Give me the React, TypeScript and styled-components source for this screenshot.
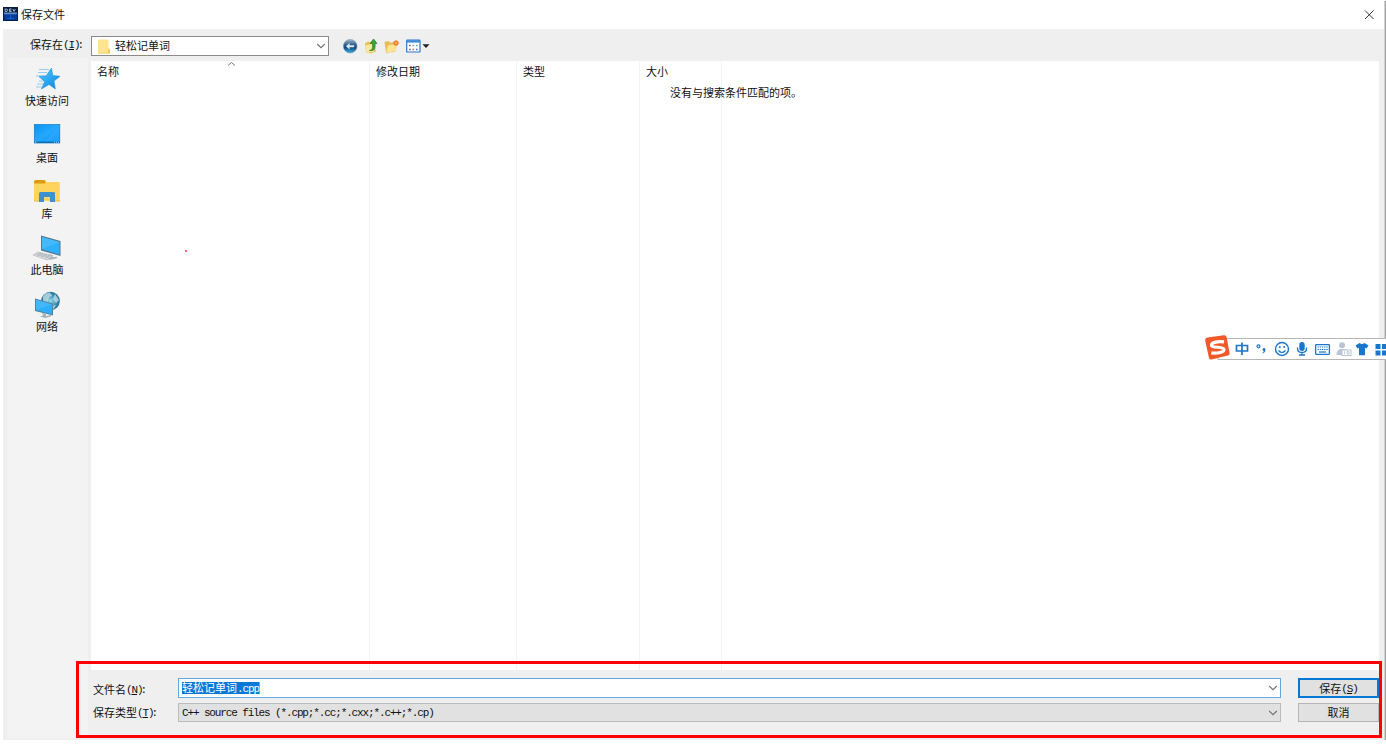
import React from 'react';
import styled, { createGlobalStyle } from 'styled-components';

const Global = createGlobalStyle`
  * { box-sizing: border-box; }
  html, body { margin: 0; padding: 0; background: #fff; overflow: hidden; }
  body { font: 11px/16px "Noto Sans CJK SC", sans-serif; color: #101010; }
`;

const Window = styled.div`
  position: relative;
  width: 1386px;
  height: 745px;
  overflow: hidden;
  background: #fff;
`;
const TitleBar = styled.header`
  display: flex;
  align-items: center;
  justify-content: space-between;
  height: 29px;
  padding: 0 11px 0 3px;
`;
const TitleText = styled.div`
  display: flex;
  align-items: center;
  gap: 3px;
  height: 28px;
  margin-bottom: 1px;
`;
const Body = styled.main`
  display: flex;
  flex-direction: column;
  width: 1381px;
  height: 711px;
  margin-left: 3px;
  background: #efefef;
`;
const Toolbar = styled.div`
  display: flex;
  height: 32px;
  padding-top: 7px;
`;
const LookIn = styled.div`
  width: 88px;
  padding: 0 0 0 27px;
  white-space: nowrap;
`;
const Latin = styled.span`
  font-family: "Liberation Mono", monospace;
  font-size: 11px;
  letter-spacing: -1.13px;
`;
const Mnemonic = styled(Latin)`
  line-height: 1;
  vertical-align: 1px;
`;
const Colon = styled(Mnemonic)`
  margin-left: -2px;
`;
const FolderSelect = styled.div`
  display: flex;
  align-items: center;
  width: 238px;
  height: 20px;
  padding: 0 2px 0 6px;
  border: 1px solid #8a8a8a;
  background: #fff;
  svg:last-child { margin-left: auto; }
`;
const FolderName = styled.span`
  height: 18px;
  margin-left: 5px;
`;
const Tools = styled.div`
  display: flex;
  align-items: flex-start;
  gap: 5.500px;
  margin: 3px 0 0 14px;
  svg:nth-child(2) { margin-top: -1px; }
`;
const Content = styled.div`
  display: flex;
  height: 679px;
`;
const Places = styled.nav`
  display: flex;
  flex-direction: column;
  width: 81px;
  height: 680px;
  margin: -3px 3px 0 4px;
  padding: 7px 1px 0 0;
  background: #f3f3f3;
`;
const Place = styled.div`
  display: flex;
  flex-direction: column;
  align-items: center;
  height: 56.4px;
  svg { display: block; }
`;
const PlaceName = styled.span`
  margin-top: -0.8px;
`;
const Main = styled.section`
  width: 1288px;
`;
const List = styled.div`
  position: relative;
  display: flex;
  height: 609px;
  background: #fff;
`;
const Column = styled.div<{ $w: number }>`
  position: relative;
  width: ${p => p.$w}px;
  padding: 2px 0 0 6px;
  border-right: 1px solid #eff4f8;
`;
const SortMark = styled.svg`
  position: absolute;
  left: 136px;
  top: 0;
`;
const Empty = styled.div`
  position: absolute;
  left: 579px;
  top: 23px;
`;
const RedDot = styled.i`
  position: absolute;
  left: 94px;
  top: 189px;
  width: 2px;
  height: 2px;
  background: #f46a6a;
`;
const Form = styled.div`
  display: grid;
  grid-template-columns: 87px 1103px 98px;
  padding-top: 8px;
`;
const Label = styled.label<{ $top: number }>`
  padding: ${p => p.$top}px 0 0 2px;
  white-space: nowrap;
`;
const Field = styled.div<{ $active?: boolean }>`
  display: flex;
  align-items: center;
  justify-content: space-between;
  width: 1103px;
  height: ${p => (p.$active ? 20 : 19)}px;
  margin-bottom: ${p => (p.$active ? 5 : 0)}px;
  padding: 0 2px 0 3px;
  border: 1px solid ${p => (p.$active ? '#61a9e2' : '#bcbcbc')};
  background: ${p => (p.$active ? '#fff' : '#e1e1e1')};
`;
const Selected = styled.span`
  height: 12px;
  line-height: 11px;
  color: #fff;
  background: #0878d7;
  border-right: 1px solid #e88b50;
`;
const Button = styled.button<{ $primary?: boolean }>`
  width: 81px;
  height: ${p => (p.$primary ? 20 : 19)}px;
  margin: 0 0 0 17px;
  padding: 0;
  border: ${p => (p.$primary ? '2px solid #0878d7' : '1px solid #b5b5b5')};
  background: #e1e1e1;
  color: #101010;
  font: inherit;
  line-height: 15px;
`;
const Highlight = styled.div`
  position: absolute;
  left: 76px;
  top: 661px;
  width: 1306px;
  height: 77px;
  border: 3px solid #fe0000;
`;
const Edge = styled.div`
  position: absolute;
  right: 0;
  top: 1px;
  width: 2px;
  height: 739px;
  background: linear-gradient(90deg, #d2d2d2 50%, #a2a2a2 50%);
`;
const Ime = styled.div`
  position: absolute;
  left: 1204px;
  top: 334px;
  width: 182px;
  height: 28px;
  svg { display: block; }
`;

const Chevron = () => (
  <svg width="10" height="8" viewBox="0 0 10 8">
    <path d="M1.2 2l3.8 3.700L8.800 2" fill="none" stroke="#707070" strokeWidth="1.1" />
  </svg>
);

const AppIcon = () => (
  <svg width="15" height="14" viewBox="0 0 14 14" preserveAspectRatio="none">
    <rect width="14" height="14" fill="#0a1c40" />
    <rect x="1" y="7" width="12" height="6" fill="#073a9b" />
    <rect x="1" y="5.500" width="12" height="1.800" fill="#5a91cf" />
    <path d="M2 2h1.500l.8 1-.8 1.500H2zM8 2H6v2.500h2M6 3.200h1.700M9.300 2l1 2.500 1.200-2.500" fill="none" stroke="#a4bdd9" strokeWidth=".9" />
    <path d="M7 8v3M4 11.500h6" stroke="#0a64c9" />
  </svg>
);

const Folder = () => (
  <svg width="12" height="15" viewBox="0 0 12 15">
    <path d="M0 .5h10.500V9l1.500 1v4.500H0z" fill="#ffe391" />
    <path d="M10 9.500l2 1v4h-2zM0 13.700h12v.8H0z" fill="#f0ca5c" />
  </svg>
);

const BackIcon = () => (
  <svg width="15" height="15" viewBox="0 0 15 15">
    <defs>
      <linearGradient id="back" x2="0" y2="1">
        <stop stopColor="#a7bccd" /><stop offset=".4" stopColor="#315e8c" />
        <stop offset=".6" stopColor="#174878" /><stop offset="1" stopColor="#2fb5ed" />
      </linearGradient>
    </defs>
    <circle cx="7.200" cy="7.200" r="6.800" fill="url(#back)" stroke="#6888a2" strokeWidth=".5" />
    <path d="M3 7.200l3.500-3.200v2.300h4.700v2H6.500v2.300z" fill="#d8ecfa" />
  </svg>
);
const UpIcon = () => (
  <svg width="15" height="16" viewBox="0 0 15 16">
    <path d="M1 5l4-1.500 1 1h4l2 9-5 2-5-1z" fill="#e7c25a" />
    <path d="M1.500 7.500l6-1.500 3 1-1 7-7 .700z" fill="#fae89c" />
    <path d="M5.500 12.500c3 0 3.300-3 3-7H6L9.600 1 13 5.500h-2c.6 5-.8 8-5.500 7z" fill="#3aa735" stroke="#267a27" strokeWidth=".7" />
  </svg>
);
const NewFolderIcon = () => (
  <svg width="16" height="15" viewBox="0 0 16 15">
    <path d="M.500 3l4-1L6 3.500h5v9l-9 1z" fill="#e8bd59" />
    <path d="M4 6l9-1-2 7.500-9 1.300z" fill="#ffe68f" stroke="#edc463" strokeWidth=".5" />
    <circle cx="12" cy="4" r="2.600" fill="#f4732c" />
    <path d="M12 1v6M9 4h6M10 2l4 4M14 2l-4 4" stroke="#f98b43" strokeWidth=".7" />
    <circle cx="12" cy="4" r="1" fill="#ffc457" />
  </svg>
);
const ViewIcon = () => (
  <svg width="25" height="15" viewBox="0 0 25 15">
    <rect x=".700" y="1.200" width="13.300" height="11.800" rx=".6" fill="#fff" stroke="#2877cb" strokeWidth="1.200" />
    <path d="M1 2.500h13" stroke="#3d8edb" strokeWidth="2.200" />
    <path d="M3 6.500h1.700M3 10.500h1.700" stroke="#4c76b5" strokeWidth="1.600" />
    <path d="M6.500 6.500h1.600M10 6.500h1.600" stroke="#63a6c8" strokeWidth="1.600" />
    <path d="M6.500 10.500h1.600" stroke="#d46b4d" strokeWidth="1.600" />
    <path d="M10 10.500h1.600" stroke="#5568c5" strokeWidth="1.600" />
    <path d="M16.500 5.200h7L20 9z" fill="#222" />
  </svg>
);

const QuickIcon = () => (
  <svg width="28" height="28" viewBox="0 0 28 28">
    <defs><linearGradient id="star" x2="1" y2="1"><stop stopColor="#55c5ff" /><stop offset="1" stopColor="#0788e3" /></linearGradient></defs>
    <path d="M6 4.500h10M5 7.500h9M3 11h7M6 16h6M4 19h7M3 22h6" stroke="#8dcaec" strokeWidth=".9" />
    <path d="M18.500 3l1.200 7.500 7.300.8-6 4.700 1.300 7.900-6.300-4.500L8.500 24l3.200-7.500L6 11.500l7.300-.8z" fill="url(#star)" stroke="#208ed1" strokeWidth=".6" />
  </svg>
);
const DesktopIcon = () => (
  <svg width="28" height="28" viewBox="0 0 28 28">
    <defs><linearGradient id="desk" x2="1" y2="1"><stop stopColor="#0793f4" /><stop offset=".5" stopColor="#26a8ff" /><stop offset="1" stopColor="#058df0" /></linearGradient></defs>
    <rect x="1.300" y="3.500" width="25.500" height="18.500" fill="url(#desk)" stroke="#147ac4" strokeWidth=".7" />
    <path d="M12 21L26 5v16z" fill="#3db2ff" opacity=".35" />
    <path d="M1.500 21.200h25" stroke="#0568ac" strokeWidth="1.200" />
    <path d="M2 21.200h1.200M21 21.200h1M23 21.200h1M25 21.200h1" stroke="#b3dcfa" />
  </svg>
);
const LibraryIcon = () => (
  <svg width="28" height="28" viewBox="0 0 28 28">
    <path d="M1 4.500q0-2.500 2-2.500h8q1.700 0 1.700 2h14.100v19H1z" fill="#ffd45c" />
    <path d="M1 4q0-2 2-2h8q1.700 0 1.700 2 0 1.500-1.500 1.500H1z" fill="#df9b0b" />
    <path d="M6 24V15.500Q6 14 7.500 14h13q1.500 0 1.500 1.500V24h-5v-5h-6v5z" fill="#3b91d1" />
    <path d="M1 23h5M22 23h5" stroke="#efbd43" />
  </svg>
);
const ComputerIcon = () => (
  <svg width="28" height="28" viewBox="0 0 28 28">
    <path d="M8 1.500l19.500 5.500v15L8 16.500z" fill="#52798f" />
    <path d="M9 3l17.500 5v12.500L9 15.300z" fill="#2eb0fc" />
    <path d="M9 3l17.500 5L9 15z" fill="#57c3ff" opacity=".55" />
    <path d="M16 20l4 1.200-1 2 5-.5v1.500l-7 1.500-4-1z" fill="#a7b2b8" />
    <path d="M0 21l5-3 15 4-6 4z" fill="#d8dcde" stroke="#a9b1b6" strokeWidth=".6" />
    <path d="M3 20l13 4M5 19l13 4M4 22l6-3M8 23l6-3M12 24l5-3" stroke="#9da7ac" strokeWidth=".5" />
  </svg>
);
const NetworkIcon = () => (
  <svg width="28" height="28" viewBox="0 0 28 28">
    <defs><radialGradient id="globe"><stop stopColor="#9ad6e9" /><stop offset=".55" stopColor="#4c9dc0" /><stop offset="1" stopColor="#236d92" /></radialGradient></defs>
    <circle cx="17.500" cy="10" r="9.300" fill="url(#globe)" />
    <path d="M12 2.500l5-1 2 3-3 2-1 4-5 2v-7zM22 3l4 6-3 3-3-4zM19 15l4-1-3 5z" fill="#c1e1e8" opacity=".75" />
    <path d="M2 7.500l18 5v12L2 20z" fill="#50849e" />
    <path d="M3 8.800l16 4.500v9.900L3 19z" fill="#2caefa" />
    <path d="M3 8.800l16 4.500L3 19z" fill="#61c6ff" opacity=".4" />
    <path d="M9 22l4 1v2l5-1v1.500l-6 1.500-5-1.500 3-1z" fill="#a4b2b9" />
  </svg>
);

const places = [
  { name: '快速访问', Icon: QuickIcon },
  { name: '桌面', Icon: DesktopIcon },
  { name: '库', Icon: LibraryIcon },
  { name: '此电脑', Icon: ComputerIcon },
  { name: '网络', Icon: NetworkIcon },
];

const ImeBar = () => (
  <Ime>
    <svg width="182" height="28" viewBox="0 0 182 28">
      <path d="M183 4.500H14v21h169" fill="#fff" stroke="#b6b6b6" />
      <path d="M3.500 3.500L20 1.300q2-.3 2.600 1.700l3 16q.3 2-1.600 2.500L7.500 25.500q-2 .4-2.500-1.500L1.200 6.500Q.9 4 3.500 3.500z" fill="#f1582a" />
      <path d="M20 7.800C14 7 7.500 8.400 7.500 11.200c0 3.500 12.500.6 12.500 4.200 0 2.700-6 4.200-12.700 3.600" fill="none" stroke="#fff" strokeWidth="3.200" />
      <g fill="none" stroke="#1976cc" strokeWidth="1.700">
        <path d="M32.500 11.500h11v5.500h-11zM38 8.500v12.500" />
        <circle cx="54.500" cy="12.300" r="1.500" strokeWidth="1.200" />
        <circle cx="78" cy="15" r="6.500" strokeWidth="1.400" />
        <path d="M74.500 16.500q3.500 4 7 0" strokeWidth="1.200" />
        <path d="M93.500 13.500v1q0 4 4.500 4t4.500-4v-1M98 18v3.500M95 21h6" strokeWidth="1.300" />
        <rect x="111.600" y="10.600" width="13.800" height="9.800" rx=".8" strokeWidth="1.300" />
        <path d="M113.500 13h10.500M113.500 15.500h10.500" strokeWidth="1.200" strokeDasharray="1.400 .8" />
        <path d="M115 18h7" strokeWidth="1.200" />
      </g>
      <g fill="#1976cc">
        <path d="M58.500 15.500q0-1.500 1.500-1.500t1.500 1.700q0 2.500-2.700 3.800l-.3-.8q1.300-.8 1.300-1.800-1.300 0-1.300-1.400z" />
        <circle cx="75.800" cy="13" r="1" /><circle cx="80.200" cy="13" r="1" />
        <rect x="95.300" y="8" width="5.400" height="9" rx="2.700" />
        <path d="M148 11.500l5-2.700q5 2.500 10 0l0 0M152 9l3 0q3 2 6 0l3.500 2.500-2 3.500-1.700-.8v7.300h-6.600v-7.300l-1.700.8-2-3.500z" fill="none" />
        <path d="M151.500 11.500l4-2.500q2.500 2 5 0l4 2.500-2 3-1.500-.8v7.500h-6v-7.500l-1.500.8z" />
        <path d="M171.500 10h5v5h-5zM178 10h4v5h-4zM171.500 16.500h5v5h-5zM178 16.500h4v5h-4z" />
      </g>
      <circle cx="138" cy="11.200" r="3" fill="#b9c4d6" />
      <path d="M132.500 20.500q0-5.500 5-5.500h5v6h-10z" fill="#b9c4d6" />
      <rect x="138" y="16" width="9" height="5.500" fill="#fff" stroke="#b9c4d6" />
      <path d="M140.500 17.300v3M143 17.700h2v2.300h-2z" fill="none" stroke="#b9c4d6" strokeWidth=".9" />
    </svg>
  </Ime>
);

export default function App() {
  return (
    <Window>
      <Global />
      <TitleBar>
        <TitleText><AppIcon /><span>保存文件</span></TitleText>
        <svg width="11" height="11" viewBox="0 0 11 11"><path d="M1 1.500l8.500 8.500M9.500 1.500L1 10" stroke="#333" strokeWidth="1" /></svg>
      </TitleBar>
      <Body>
        <Toolbar>
          <LookIn>保存在<Mnemonic>(<u>I</u>)</Mnemonic><Colon>:</Colon></LookIn>
          <FolderSelect><Folder /><FolderName>轻松记单词</FolderName><Chevron /></FolderSelect>
          <Tools><BackIcon /><UpIcon /><NewFolderIcon /><ViewIcon /></Tools>
        </Toolbar>
        <Content>
          <Places>
            {places.map(({ name, Icon }) => (
              <Place key={name}><Icon /><PlaceName>{name}</PlaceName></Place>
            ))}
          </Places>
          <Main>
            <List>
              <Column $w={279}>
                名称
                <SortMark width="9" height="6" viewBox="0 0 9 6"><path d="M1 4.500l3.500-3 3.500 3" fill="none" stroke="#777" /></SortMark>
              </Column>
              <Column $w={147}>修改日期</Column>
              <Column $w={123}>类型</Column>
              <Column $w={82}>大小</Column>
              <Empty>没有与搜索条件匹配的项。</Empty>
              <RedDot />
            </List>
            <Form>
              <Label $top={3}>文件名<Mnemonic>(<u>N</u>)</Mnemonic><Colon>:</Colon></Label>
              <Field $active><Selected>轻松记单词<Latin>.cpp</Latin></Selected><Chevron /></Field>
              <Button $primary>保存<Mnemonic>(<u>S</u>)</Mnemonic></Button>
              <Label $top={1}>保存类型<Mnemonic>(<u>T</u>)</Mnemonic><Colon>:</Colon></Label>
              <Field><Latin>C++ source files (*.cpp;*.cc;*.cxx;*.c++;*.cp)</Latin><Chevron /></Field>
              <Button>取消</Button>
            </Form>
          </Main>
        </Content>
      </Body>
      <Highlight />
      <Edge />
      <ImeBar />
    </Window>
  );
}
